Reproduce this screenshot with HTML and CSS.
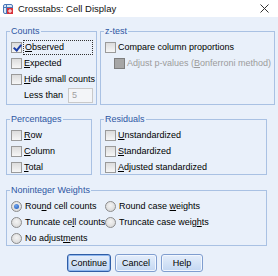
FILE: index.html
```html
<!DOCTYPE html>
<html lang="en">
<head>
  <meta charset="UTF-8">
  <title>Crosstabs: Cell Display</title>
  <link rel="stylesheet" href="styles.css">
</head>
<body>
  <div class="titlebar">
    <svg class="app-icon" width="12" height="12" viewBox="0 0 12 12">
      <rect x="1.5" y="1.5" width="9" height="9" rx="1.5" fill="#dbe8f7" stroke="#4a78b8"/>
      <line x1="1.5" y1="4.5" x2="10.5" y2="4.5" stroke="#4a78b8"/>
      <line x1="4.5" y1="1.5" x2="4.5" y2="10.5" stroke="#4a78b8"/>
      <rect x="5" y="5" width="6" height="6" fill="#d8333a"/>
      <line x1="8" y1="6" x2="8" y2="10" stroke="#fff"/>
      <line x1="6" y1="8" x2="10" y2="8" stroke="#fff"/>
    </svg>
    <span class="title">Crosstabs: Cell Display</span>
    <svg class="close" width="9" height="9" viewBox="0 0 9 9">
      <line x1="0.5" y1="0.5" x2="8.5" y2="8.5" stroke="#333"/>
      <line x1="8.5" y1="0.5" x2="0.5" y2="8.5" stroke="#333"/>
    </svg>
  </div>

  <div class="main">
    <div class="row row-top">
      <div class="group counts">
        <div class="group-label">Counts</div>
        <div class="option"><span class="check checked"></span><span class="text focus"><u>O</u>bserved</span></div>
        <div class="option"><span class="check"></span><span class="text"><u>E</u>xpected</span></div>
        <div class="option"><span class="check"></span><span class="text"><u>H</u>ide small counts</span></div>
        <div class="option less-than"><span class="text">Less than</span><span class="spin">5</span></div>
      </div>
      <div class="group ztest">
        <div class="group-label">z-test</div>
        <div class="option"><span class="check"></span><span class="text">Compare column proportions</span></div>
        <div class="option indent disabled"><span class="check"></span><span class="text">Adjust p-values (<u>B</u>onferroni method)</span></div>
      </div>
    </div>

    <div class="row row-mid">
      <div class="group percentages">
        <div class="group-label">Percentages</div>
        <div class="option"><span class="check"></span><span class="text"><u>R</u>ow</span></div>
        <div class="option"><span class="check"></span><span class="text"><u>C</u>olumn</span></div>
        <div class="option"><span class="check"></span><span class="text"><u>T</u>otal</span></div>
      </div>
      <div class="group residuals">
        <div class="group-label">Residuals</div>
        <div class="option"><span class="check"></span><span class="text"><u>U</u>nstandardized</span></div>
        <div class="option"><span class="check"></span><span class="text"><u>S</u>tandardized</span></div>
        <div class="option"><span class="check"></span><span class="text"><u>A</u>djusted standardized</span></div>
      </div>
    </div>

    <div class="group weights">
      <div class="group-label">Noninteger Weights</div>
      <div class="radio-grid">
        <div class="option"><span class="radio selected"></span><span class="text">Rou<u>n</u>d cell counts</span></div>
        <div class="option"><span class="radio"></span><span class="text">Round case <u>w</u>eights</span></div>
        <div class="option"><span class="radio"></span><span class="text">Truncate ce<u>l</u>l counts</span></div>
        <div class="option"><span class="radio"></span><span class="text">Truncate case weig<u>h</u>ts</span></div>
        <div class="option"><span class="radio"></span><span class="text">No adjust<u>m</u>ents</span></div>
      </div>
    </div>

    <div class="buttons">
      <button class="btn default">Continue</button>
      <button class="btn">Cancel</button>
      <button class="btn">Help</button>
    </div>
  </div>
</body>
</html>
```

FILE: styles.css
```css
* {
  box-sizing: border-box;
  margin: 0;
  padding: 0;
}
body {
  width: 278px;
  height: 276px;
  overflow: hidden;
  background-color: #e9f0fa;
  font-family: "Liberation Sans", Arial, sans-serif;
  font-size: 9px;
  color: #000;
}
u {
  text-decoration: underline;
  text-underline-offset: 1px;
}
.titlebar {
  height: 17px;
  background-color: #fff;
  display: flex;
  align-items: center;
  padding-left: 2px;
}
.app-icon {
  margin-right: 4px;
}
.title {
  font-size: 9.5px;
  color: #111;
}
.close {
  margin-left: auto;
  margin-right: 9px;
}
.main {
  padding: 14px 11px 0 6px;
}
.row {
  display: flex;
}
.group {
  position: relative;
  border: 1px solid #a9c1e3;
  padding: 7px 3px 0 4px;
}
.group-label {
  position: absolute;
  top: -7px;
  left: 3px;
  padding: 0 1px;
  line-height: 13px;
  background-color: #e9f0fa;
  color: #2d56a3;
}
.row-top {
  gap: 3px;
}
.row-top .group {
  height: 74px;
}
.counts {
  width: 91px;
}
.ztest {
  flex: 1;
}
.row-mid {
  gap: 8px;
  margin-top: 14px;
}
.row-mid .group {
  height: 56px;
}
.percentages {
  width: 86px;
}
.residuals {
  flex: 1;
}
.weights {
  margin-top: 15px;
  height: 56px;
}
.option {
  height: 16px;
  display: flex;
  align-items: center;
  white-space: nowrap;
}
.option .text {
  margin-left: 2px;
  line-height: 13px;
}
.option .focus {
  flex: 1;
  padding-left: 1px;
  margin-left: 1px;
  border: 1px dotted #333;
}
.check {
  width: 11px;
  height: 11px;
  flex: none;
  border: 1px solid #9a9a9a;
  background: linear-gradient(#dcdcdc, #f6f6f6);
  position: relative;
}
.check.checked::after {
  content: "";
  position: absolute;
  left: 3px;
  top: 0;
  width: 3px;
  height: 6px;
  border: solid #1d3fa8;
  border-width: 0 2px 2px 0;
  transform: rotate(40deg);
}
.indent {
  padding-left: 9px;
}
.disabled .check {
  border-color: #7e7e7e;
  background: #a6a6a6;
}
.disabled .text {
  color: #9c9c9c;
}
.less-than .text {
  margin-left: 13px;
}
.spin {
  margin-left: 5px;
  width: 26px;
  height: 15px;
  border: 1px solid #c9c9c9;
  background-color: #f3f5f8;
  color: #a0a0a0;
  padding-left: 3px;
  line-height: 13px;
}
.radio-grid {
  display: grid;
  grid-template-columns: 94px 1fr;
}
.radio {
  width: 11px;
  height: 11px;
  flex: none;
  border-radius: 50%;
  border: 1px solid #8c8c8c;
  background: radial-gradient(circle at 50% 40%, #f4f4f4, #d2d2d2);
  position: relative;
}
.radio.selected::after {
  content: "";
  position: absolute;
  left: 2px;
  top: 2px;
  width: 5px;
  height: 5px;
  border-radius: 50%;
  background: radial-gradient(circle at 40% 35%, #6ea4ec, #1c55b8);
}
.radio + .text {
  margin-left: 3px;
}
.buttons {
  display: flex;
  justify-content: center;
  gap: 4px;
  margin-top: 8px;
  padding-right: 3px;
}
.btn {
  width: 42px;
  height: 18px;
  font-family: inherit;
  font-size: 9px;
  color: #000;
  border: 1px solid #7f9dcf;
  border-radius: 3px;
  background: linear-gradient(#e5eefb, #c3d7f2);
  box-shadow: inset 0 0 0 1px #f2f7fe;
}
.btn.default {
  width: 44px;
  border-color: #2f5da6;
  box-shadow: inset 0 0 0 1px #8fb7ee;
}
```
